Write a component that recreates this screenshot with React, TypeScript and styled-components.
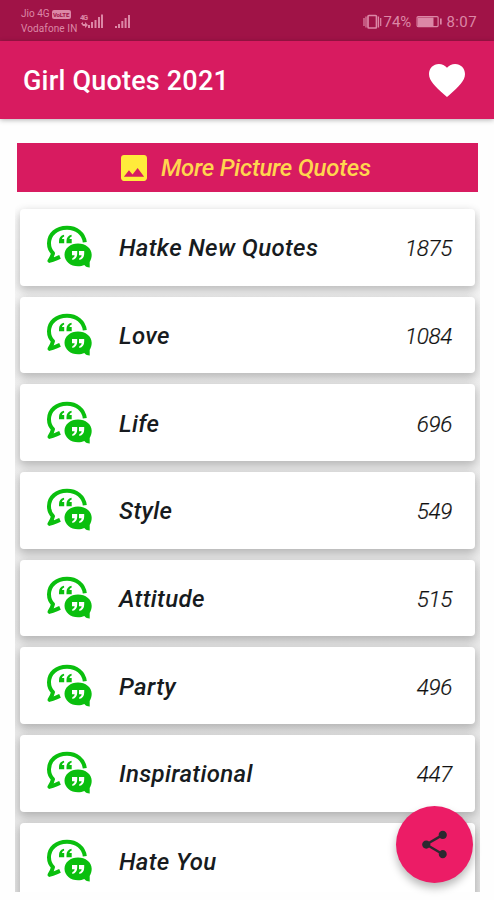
import React from "react";
import styled, { createGlobalStyle } from "styled-components";

const GlobalStyle = createGlobalStyle`
  * { box-sizing: border-box; }
  body { margin: 0; background: #fefefe; font-family: Roboto, "Liberation Sans", sans-serif; }
`;

const Screen = styled.div`
  width: 494px;
  height: 900px;
  overflow: hidden;
  display: flex;
  flex-direction: column;
  background: #fefefe;
`;

const StatusBar = styled.div`
  height: 41px;
  flex: none;
  background: #a01347;
  color: #dc87a6;
  display: flex;
  justify-content: space-between;
  padding: 0 17px 0 21px;
`;

const StatusLeft = styled.div`
  display: flex;
`;

const Carriers = styled.div`
  width: 59px;
  padding-top: 7px;
  font-size: 10px;
  line-height: 14.5px;
  white-space: nowrap;
`;

const CarrierLine = styled.div<{ $spacing: number }>`
  display: flex;
  align-items: center;
  gap: 2px;
  letter-spacing: ${(p) => p.$spacing}px;
`;

const VoBadge = styled.span`
  height: 9px;
  width: 19px;
  border-radius: 2px;
  background: #dc87a6;
  color: #a01347;
  font-size: 6px;
  font-weight: 700;
  line-height: 9px;
  letter-spacing: -0.1px;
  text-align: center;
`;

const StatusRight = styled.div`
  display: flex;
  align-items: center;
  padding-top: 2px;
  font-size: 15px;
`;

const Percent = styled.span`
  width: 32px;
`;

const Clock = styled.span`
  letter-spacing: 0.4px;
`;

const AppBar = styled.header`
  height: 78px;
  flex: none;
  background: #d81b60;
  color: #fff;
  display: flex;
  align-items: center;
  justify-content: space-between;
  padding: 0 29px 0 23px;
  box-shadow: 0 1px 5px rgba(0, 0, 0, 0.3);
`;

const Title = styled.h1`
  margin: 2px 0 0;
  font-size: 27px;
  font-weight: 500;
  letter-spacing: 0.2px;
  white-space: nowrap;
`;

const Banner = styled.div`
  height: 49px;
  flex: none;
  margin: 24px 16px 0 17px;
  background: #d81b60;
  color: #ffd54f;
  display: flex;
  align-items: center;
  padding-left: 104px;
  gap: 14px;
`;

const BannerText = styled.span`
  font-size: 24px;
  font-weight: 500;
  font-style: italic;
  letter-spacing: -0.25px;
  white-space: nowrap;
`;

const List = styled.main`
  width: 465px;
  height: 700px;
  flex: none;
  margin-left: 15px;
  padding: 17px 5px 0;
  overflow: hidden;
  display: flex;
  flex-direction: column;
  gap: 11px;
  background: linear-gradient(
    to bottom,
    rgba(0, 0, 0, 0) 14px,
    rgba(0, 0, 0, 0.02) 40px,
    rgba(0, 0, 0, 0.06) 150px,
    rgba(0, 0, 0, 0.1) 700px
  );
`;

const Card = styled.div`
  height: 76.7px;
  flex: none;
  border-radius: 4px;
  background: #fff;
  display: flex;
  align-items: center;
  padding: 0 23px 0 26px;
  box-shadow: 0 4px 8px 1px rgba(0, 0, 0, 0.15), 0 3px 12px rgba(0, 0, 0, 0.1);
`;

const Label = styled.span`
  flex: 1;
  margin: 2px 0 0 27px;
  font-size: 24px;
  font-weight: 500;
  font-style: italic;
  letter-spacing: 0.35px;
  color: #171b20;
`;

const Count = styled.span`
  margin-top: 2px;
  font-size: 22.5px;
  font-style: italic;
  font-weight: 300;
  letter-spacing: -0.35px;
  color: #111;
  -webkit-text-stroke: 0.2px #111;
`;

const ShareButton = styled.button`
  position: fixed;
  left: 396px;
  top: 806px;
  width: 77px;
  height: 77px;
  padding: 0;
  border: 0;
  border-radius: 50%;
  background: #ec1c66;
  display: flex;
  align-items: center;
  justify-content: center;
  box-shadow: 0 5px 9px rgba(0, 0, 0, 0.28);
`;

const QuoteSvg = styled.svg`
  flex: none;
  margin-top: 2px;
`;

const QuoteIcon = () => (
  <QuoteSvg width="46" height="46" viewBox="0 0 46 46">
    <path
      d="M38.800 17.300C37.800 8.500 30.500 2.800 21 2.800C10.500 2.800 3 9.200 3 18.300C3 22.500 4.700 26 7 28.200C6.500 31 5.300 33 3.500 35.900C7.500 35.100 10 33.600 14 31.900"
      fill="none"
      stroke="#0abf0e"
      strokeWidth="4"
      strokeLinejoin="round"
    />
    <path
      d="M32 18.500C24.500 18.500 18.500 23.300 18.500 29.800C18.500 36.500 24.500 41.300 32 41.300C34.500 41.300 36.500 41 38.300 40.100C40 42 42 42.700 43.700 42.600V36.900C45 34.900 45.700 32.600 45.700 29.800C45.700 23.300 39.500 18.500 32 18.500Z"
      fill="#0abf0e"
    />
    <path
      d="M18 9.800C14.700 10.500 13 12.700 13 16V18.300H18.200V14H16C16.100 12.900 16.900 12.100 18.200 11.600ZM25.500 9.800C22.200 10.500 20.500 12.700 20.500 16V18.300H25.700V14H23.500C23.600 12.900 24.400 12.100 25.700 11.600Z"
      fill="#0abf0e"
    />
    <path
      d="M26 26H31.200V28.500C31.200 32 29.600 34.200 26.300 35V33.200C28 32.500 28.600 31.500 28.600 30.300H26ZM33 26H38.200V28.500C38.200 32 36.600 34.200 33.300 35V33.200C35 32.500 35.600 31.500 35.600 30.300H33Z"
      fill="#fff"
    />
  </QuoteSvg>
);

const SignalIcons = () => (
  <svg width="54" height="41" viewBox="0 0 54 41" fill="#dc87a6">
    <text x="0" y="20" fontSize="7.500" fontWeight="700" fontFamily="Roboto, sans-serif" textLength="8">
      4G
    </text>
    <path d="M1 23.500l2-1.500v2h2v-2l3 3-3 3v-2H3zM8 25h2v3H8zM11 22h2v6h-2zM14.500 20h2v8h-2zM18 17h2v11h-2zM21 14.500h2V28h-2z" />
    <path d="M35 26h2v2h-2zM38 24h2v4h-2zM41.300 21h2v7h-2zM44.600 18h2v10h-2zM48 15h2v13h-2z" />
  </svg>
);

const VibrateIcon = () => (
  <svg width="20" height="16" viewBox="0 0 20 16" fill="none" stroke="#dc87a6" strokeWidth="1.700">
    <rect x="5" y="1.500" width="8.500" height="12.500" rx="1" />
    <path d="M1 4v8M3 2.500v11M15.500 2.500v11M17.700 4v8" strokeWidth="1.200" />
  </svg>
);

const BatteryIcon = () => (
  <svg width="31" height="14" viewBox="0 0 31 14">
    <rect x="2.100" y="1.600" width="21" height="10" rx="1" fill="none" stroke="#dc87a6" strokeWidth="1.200" />
    <path d="M3 2.500H18.500v8.500H3z" fill="#dc87a6" />
    <path d="M25 3.500h1.700v6h-1.700z" fill="#dc87a6" />
  </svg>
);

const HeartIcon = () => (
  <svg width="36" height="33" viewBox="2 3 20 18.350" preserveAspectRatio="none">
    <path
      fill="#fff"
      d="M12 21.350l-1.450-1.320C5.400 15.360 2 12.280 2 8.500 2 5.420 4.420 3 7.500 3c1.740 0 3.410.81 4.500 2.090C13.090 3.810 14.760 3 16.500 3 19.580 3 22 5.420 22 8.500c0 3.780-3.400 6.860-8.550 11.540L12 21.350z"
    />
  </svg>
);

const PictureIcon = () => (
  <svg width="26" height="26" viewBox="3 3 18 18">
    <path
      fill="#ffeb3b"
      d="M21 19V5c0-1.100-.9-2-2-2H5c-1.100 0-2 .9-2 2v14c0 1.100.9 2 2 2h14c1.100 0 2-.9 2-2zM8.500 13.500l2.500 3.010L14.500 12l4.500 6H5l3.500-4.500z"
    />
  </svg>
);

const ShareIcon = () => (
  <svg width="33" height="33" viewBox="0 0 24 24">
    <path
      fill="#2b2930"
      d="M18 16.080c-.76 0-1.440.3-1.960.77L8.910 12.700c.05-.23.09-.46.09-.7s-.04-.47-.09-.7l7.050-4.110c.54.5 1.250.81 2.040.81 1.660 0 3-1.340 3-3s-1.340-3-3-3-3 1.340-3 3c0 .24.04.47.09.7L8.040 9.810C7.500 9.310 6.790 9 6 9c-1.660 0-3 1.340-3 3s1.340 3 3 3c.79 0 1.500-.31 2.040-.81l7.120 4.160c-.05.21-.08.43-.08.65 0 1.610 1.310 2.920 2.920 2.920s2.920-1.310 2.920-2.920-1.310-2.920-2.920-2.920z"
    />
  </svg>
);

const categories: { name: string; count?: number }[] = [
  { name: "Hatke New Quotes", count: 1875 },
  { name: "Love", count: 1084 },
  { name: "Life", count: 696 },
  { name: "Style", count: 549 },
  { name: "Attitude", count: 515 },
  { name: "Party", count: 496 },
  { name: "Inspirational", count: 447 },
  { name: "Hate You" },
];

export default function App() {
  return (
    <>
      <GlobalStyle />
      <Screen>
        <StatusBar>
          <StatusLeft>
            <Carriers>
              <CarrierLine $spacing={0}>
                Jio 4G <VoBadge>VoLTE</VoBadge>
              </CarrierLine>
              <CarrierLine $spacing={0.1}>Vodafone IN</CarrierLine>
            </Carriers>
            <SignalIcons />
          </StatusLeft>
          <StatusRight>
            <VibrateIcon />
            <Percent>74%</Percent>
            <BatteryIcon />
            <Clock>8:07</Clock>
          </StatusRight>
        </StatusBar>
        <AppBar>
          <Title>Girl Quotes 2021</Title>
          <HeartIcon />
        </AppBar>
        <Banner>
          <PictureIcon />
          <BannerText>More Picture Quotes</BannerText>
        </Banner>
        <List>
          {categories.map((c) => (
            <Card key={c.name}>
              <QuoteIcon />
              <Label>{c.name}</Label>
              {c.count !== undefined && <Count>{c.count}</Count>}
            </Card>
          ))}
        </List>
        <ShareButton aria-label="Share">
          <ShareIcon />
        </ShareButton>
      </Screen>
    </>
  );
}
